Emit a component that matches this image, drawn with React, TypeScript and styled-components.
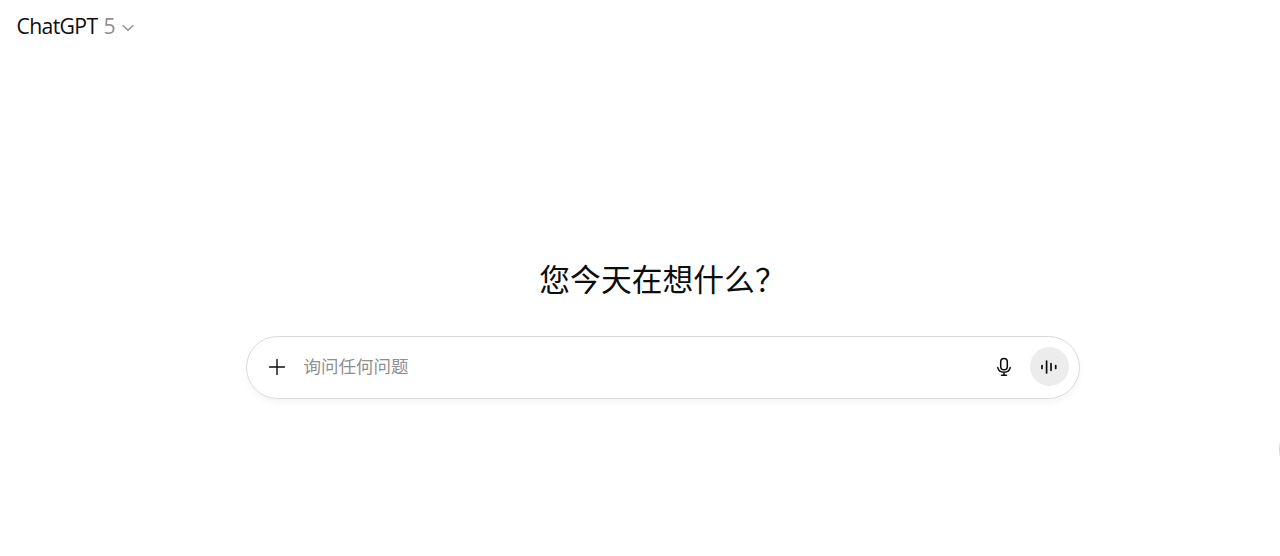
import styled, { createGlobalStyle } from 'styled-components';

const Colors = {
  Text: '#0d0d0d',
  Muted: '#8f8f8f',
  Border: '#d9d9d9',
  Voice: '#ececec',
};

const GlobalStyle = createGlobalStyle`
  * {
    box-sizing: border-box;
  }

  body {
    margin: 0;
    overflow: hidden;
    background: #fff;
    color: ${Colors.Text};
    font-family: 'Noto Sans', 'Noto Sans CJK SC', sans-serif;
  }
`;

const Page = styled.div`
  position: relative;
  height: 556px;
  overflow: hidden;

  display: flex;
  flex-direction: column;
`;

const Header = styled.header`
  height: 52px;
  padding-left: 16.5px;

  display: flex;
  align-items: center;
`;

const ModelButton = styled.button`
  padding: 0;
  border: 0;
  background: none;
  color: ${Colors.Text};
  font-family: 'Open Sans', 'Noto Sans', sans-serif;
  font-size: 21.2px;
  line-height: 28px;
  letter-spacing: -0.65px;

  display: flex;
  align-items: center;

  span {
    margin-left: 6px;
    color: ${Colors.Muted};
  }

  svg {
    margin: 3px 0 0 7px;
  }
`;

const Main = styled.main`
  width: 834px;
  margin: 204px 0 0 246px;

  display: flex;
  flex-direction: column;
  align-items: center;
`;

const Title = styled.h1`
  margin: 0 1px 36px 0;
  font-family: 'Noto Sans CJK SC', sans-serif;
  font-size: 30.8px;
  font-weight: 400;
  line-height: 44px;
  white-space: nowrap;
`;

const Composer = styled.form`
  width: 100%;
  height: 62.5px;
  padding: 0 10.5px 1px 21px;
  border: 1px solid ${Colors.Border};
  border-radius: 32px;
  box-shadow: 0 4px 6px rgba(0, 0, 0, 0.04);

  display: flex;
  align-items: center;
`;

const IconButton = styled.button<{ $size: number; $filled?: boolean }>`
  width: ${({ $size }) => $size}px;
  height: ${({ $size }) => $size}px;
  padding: 0;
  border: 0;
  border-radius: 50%;
  background: ${({ $filled }) => ($filled ? Colors.Voice : 'none')};
  color: ${Colors.Text};

  display: flex;
  flex: none;
  align-items: center;
  justify-content: center;
`;

const Prompt = styled.div`
  flex: 1;
  padding: 0 0 2px 17.5px;
  color: ${Colors.Muted};
  font-family: 'Noto Sans CJK SC', sans-serif;
  font-size: 17.5px;
  font-weight: 400;
  line-height: 26px;
`;

const Actions = styled.div`
  display: flex;
  align-items: center;
  gap: 15.5px;
`;

const EdgeHandle = styled.div`
  position: absolute;
  top: 443px;
  right: 0;
  width: 1px;
  height: 13px;
  background: linear-gradient(#f0f0fe, #cfcffa, #f0f0fe);
`;

const App = () => {
  return (
    <Page>
      <GlobalStyle />
      <Header>
        <ModelButton type='button'>
          ChatGPT
          <span>5</span>
          <svg width='12' height='8' viewBox='0 0 12 8' fill='none'>
            <path d='M0.8 1.2L6 6.2L11.2 1.2' stroke={Colors.Muted} strokeWidth='1.4' />
          </svg>
        </ModelButton>
      </Header>

      <Main>
        <Title>您今天在想什么？</Title>
        <Composer>
          <IconButton type='button' $size={18}>
            <svg width='18' height='18' viewBox='0 0 18 18' fill='none'>
              <path
                d='M9 1.5V16.5M1.5 9H16.5'
                stroke='currentColor'
                strokeWidth='1.4'
                strokeLinecap='round'
              />
            </svg>
          </IconButton>
          <Prompt>询问任何问题</Prompt>
          <Actions>
            <IconButton type='button' $size={20}>
              <svg
                width='20'
                height='20'
                viewBox='0 0 20 20'
                fill='none'
                stroke='currentColor'
                strokeWidth='1.5'
                strokeLinecap='round'
              >
                <rect x='6.7' y='1.4' width='6.6' height='11.4' rx='3.3' />
                <path d='M3.8 10.6C4.4 13.5 6.8 15.2 10 15.2S15.6 13.5 16.2 10.6M10 15.2V18.2M7.5 18.2H12.5' />
              </svg>
            </IconButton>
            <IconButton type='button' $size={39} $filled>
              <svg
                width='18'
                height='18'
                viewBox='0 0 18 18'
                fill='none'
                stroke='currentColor'
                strokeWidth='1.7'
                strokeLinecap='round'
              >
                <path d='M2 7.6V10.4M6.6 3V15M11 5.7V12.3M15.7 7.6V10.4' />
              </svg>
            </IconButton>
          </Actions>
        </Composer>
      </Main>

      <EdgeHandle />
    </Page>
  );
};

export default App;
